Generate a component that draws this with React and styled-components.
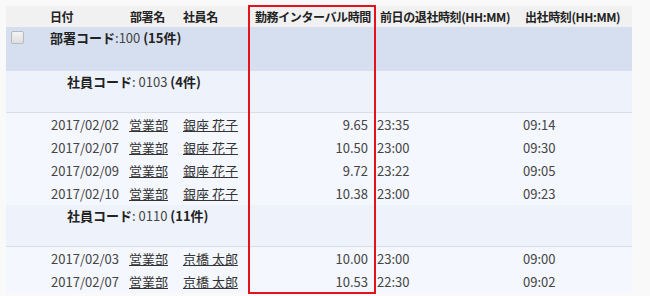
import React from "react";
import styled, { createGlobalStyle } from "styled-components";

const GlobalStyle = createGlobalStyle`
  html, body { margin: 0; padding: 0; background: #f9f9f9; }
  body {
    font-family: "Noto Sans CJK JP", "Noto Sans", sans-serif;
    font-size: 12px;
    color: #333;
  }
`;

const COLS = "36px 82px 54px 70px 126px 146px 112px";

const Page = styled.div`
  width: 650px;
  height: 296px;
  overflow: hidden;
  padding: 6px 0 0 6px;
  box-sizing: border-box;
  position: relative;
`;

const Table = styled.div`
  width: 626px;
  display: flex;
  flex-direction: column;
`;

const HeaderRow = styled.div`
  display: grid;
  grid-template-columns: ${COLS};
  height: 21px;
  align-items: center;
  background: #f1f1f1;
  font-weight: bold;
  color: #222;
  letter-spacing: -0.4px;
`;

const HeadCell = styled.div`
  padding-left: ${(p) => p.$pl || 6}px;
  white-space: nowrap;
  overflow: hidden;
`;

const GroupRow = styled.div`
  display: grid;
  grid-template-columns: 36px 1fr;
  height: ${(p) => p.$h}px;
  background: ${(p) => p.$bg};
  border-bottom: ${(p) => (p.$line ? "1px solid #d9dde5" : "none")};
  box-sizing: border-box;
  align-items: start;
`;

const CheckCell = styled.div`
  padding: 4px 0 0 5px;
`;

const Checkbox = styled.div`
  width: 11px;
  height: 11px;
  border: 1px solid #b9b9b9;
  border-radius: 2px;
  background: linear-gradient(#f4f4f4, #dedede);
`;

const GroupLabel = styled.div`
  padding: ${(p) => p.$pt}px 0 0 ${(p) => p.$pl}px;
  font-size: 13px;
  color: #444;
  white-space: nowrap;
`;

const B = styled.b`
  color: #222;
`;

const DataRow = styled.div`
  display: grid;
  grid-template-columns: ${COLS};
  height: 23px;
  align-items: center;
  background: #f4f7fd;
  color: #444;
  font-size: 13px;
`;

const Cell = styled.div`
  text-align: ${(p) => p.$align || "left"};
  padding: 0 ${(p) => p.$pr || 0}px 0 ${(p) => p.$pl || 0}px;
  white-space: nowrap;
`;

const Link = styled.a`
  color: #333;
  text-decoration: underline;
`;

const Highlight = styled.div`
  position: absolute;
  left: 248px;
  top: 5px;
  width: 128px;
  height: 289px;
  border: 2px solid #e3121b;
  box-sizing: border-box;
  pointer-events: none;
`;

const rowsA = [
  ["2017/02/02", "営業部", "銀座 花子", "9.65", "23:35", "09:14"],
  ["2017/02/07", "営業部", "銀座 花子", "10.50", "23:00", "09:30"],
  ["2017/02/09", "営業部", "銀座 花子", "9.72", "23:22", "09:05"],
  ["2017/02/10", "営業部", "銀座 花子", "10.38", "23:00", "09:23"],
];
const rowsB = [
  ["2017/02/03", "営業部", "京橋 太郎", "10.00", "23:00", "09:00"],
  ["2017/02/07", "営業部", "京橋 太郎", "10.53", "22:30", "09:02"],
];

function Row({ r }) {
  return (
    <DataRow>
      <Cell />
      <Cell $align="right" $pr={5}>{r[0]}</Cell>
      <Cell $pl={5}><Link>{r[1]}</Link></Cell>
      <Cell $pl={5}><Link>{r[2]}</Link></Cell>
      <Cell $align="right" $pr={6}>{r[3]}</Cell>
      <Cell $pl={3}>{r[4]}</Cell>
      <Cell $pl={3}>{r[5]}</Cell>
    </DataRow>
  );
}

export default function App() {
  return (
    <Page>
      <GlobalStyle />
      <Table>
        <HeaderRow>
          <HeadCell />
          <HeadCell $pl={8}>日付</HeadCell>
          <HeadCell>部署名</HeadCell>
          <HeadCell $pl={5}>社員名</HeadCell>
          <HeadCell $pl={7}>勤務インターバル時間</HeadCell>
          <HeadCell>前日の退社時刻(HH:MM)</HeadCell>
          <HeadCell $pl={5}>出社時刻(HH:MM)</HeadCell>
        </HeaderRow>
        <GroupRow $h={44} $bg="#d6dff0">
          <CheckCell><Checkbox /></CheckCell>
          <GroupLabel $pt={1} $pl={8}>
            <B>部署コード</B>:100 <B>(15件)</B>
          </GroupLabel>
        </GroupRow>
        <GroupRow $h={42} $bg="#eef2fa" $line>
          <div />
          <GroupLabel $pt={1} $pl={25}>
            <B>社員コード</B>: 0103 <B>(4件)</B>
          </GroupLabel>
        </GroupRow>
        {rowsA.map((r, i) => <Row key={"a" + i} r={r} />)}
        <GroupRow $h={42} $bg="#eef2fa" $line>
          <div />
          <GroupLabel $pt={1} $pl={25}>
            <B>社員コード</B>: 0110 <B>(11件)</B>
          </GroupLabel>
        </GroupRow>
        {rowsB.map((r, i) => <Row key={"b" + i} r={r} />)}
      </Table>
      <Highlight />
    </Page>
  );
}
